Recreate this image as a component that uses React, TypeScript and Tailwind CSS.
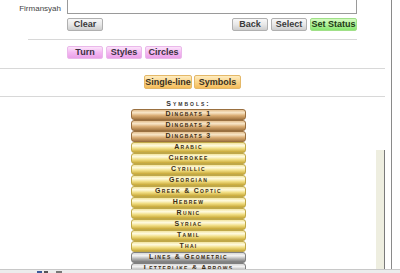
import React from "react";

const grayBtn =
  "h-[13px] border border-[#b0b0b0] rounded-[2px] bg-gradient-to-b from-[#f8f8f8] via-[#e8e8e8] to-[#cdcdcd] text-[9px] font-bold leading-[11px] text-[#3a3a3a] text-center";
const pinkBtn =
  "h-[13px] border border-[#eab8ea] rounded-[2px] bg-gradient-to-b from-[#fbe4fa] via-[#f4b8f2] to-[#eaa0e8] text-[9px] font-bold leading-[11px] text-[#3a3040] text-center";
const orangeBtn =
  "h-[14px] border border-[#e4b868] rounded-[2px] bg-gradient-to-b from-[#feecc0] via-[#fad488] to-[#f4bc5a] text-[9px] font-bold leading-[12px] text-[#3a3020] text-center";

type Sym = { label: string; tone: "bronze" | "gold" | "silver" };

const symbols: Sym[] = [
  { label: "Dingbats 1", tone: "bronze" },
  { label: "Dingbats 2", tone: "bronze" },
  { label: "Dingbats 3", tone: "bronze" },
  { label: "Arabic", tone: "gold" },
  { label: "Cherokee", tone: "gold" },
  { label: "Cyrillic", tone: "gold" },
  { label: "Georgian", tone: "gold" },
  { label: "Greek & Coptic", tone: "gold" },
  { label: "Hebrew", tone: "gold" },
  { label: "Runic", tone: "gold" },
  { label: "Syriac", tone: "gold" },
  { label: "Tamil", tone: "gold" },
  { label: "Thai", tone: "gold" },
  { label: "Lines & Geometric", tone: "silver" },
  { label: "Letterlike & Arrows", tone: "silver" },
];

const toneClass = {
  bronze:
    "border-[#9a7040] bg-[linear-gradient(to_bottom,#e4c090_0%,#f8e6c8_30%,#dcb078_60%,#a87a44_100%)]",
  gold: "border-[#c0a848] bg-[linear-gradient(to_bottom,#f2e4a0_0%,#fffbe0_30%,#f0dc80_62%,#c8a838_100%)]",
  silver:
    "border-[#808080] bg-[linear-gradient(to_bottom,#d8d8d8_0%,#f4f4f4_30%,#b8b8b8_62%,#7a7a7a_100%)]",
};

function SymbolButton({ item }: { item: Sym }) {
  return (
    <div
      className={`h-[11px] border rounded-[3px] flex items-center justify-center text-[7px] font-bold tracking-[1.3px] text-[#3a2c14] [font-variant:small-caps] ${toneClass[item.tone]}`}
    >
      {item.label}
    </div>
  );
}

export default function App() {
  return (
    <div className="relative w-[400px] h-[273px] overflow-hidden bg-white font-['Liberation_Sans',Arial,sans-serif]">
      <div className="flex h-full">
        {/* Main column */}
        <div className="w-[385px] flex flex-col">
          {/* Name row */}
          <div className="flex items-start">
            <div className="w-[64px] pt-[3px] pr-[3px] text-right text-[8px] text-[#444]">
              Firmansyah
            </div>
            <div className="ml-[3px] -mt-[1px] w-[290px] h-[15px] border border-[#9a9a9a] border-t-[#7a7a7a] bg-white" />
          </div>

          {/* Actions */}
          <div className="flex mt-[3px] pl-[67px] pr-[28px]">
            <button className={`${grayBtn} w-[36px]`}>Clear</button>
            <div className="flex-1" />
            <div className="flex gap-[3px]">
              <button className={`${grayBtn} w-[36px]`}>Back</button>
              <button className={`${grayBtn} w-[36px]`}>Select</button>
              <button className="h-[13px] w-[47px] border border-[#a0e088] rounded-[2px] bg-gradient-to-b from-[#d4fac0] via-[#aef298] to-[#88e670] text-[9px] font-bold leading-[11px] text-[#1e3a14] text-center">
                Set Status
              </button>
            </div>
          </div>

          <div className="ml-[28px] w-[329px] h-[2px] mt-[8px] bg-[#a4a4a4] border-b border-[#d8d8d8]" />

          {/* Modes */}
          <div className="flex gap-[3px] mt-[6px] pl-[67px]">
            <button className={`${pinkBtn} w-[36px]`}>Turn</button>
            <button className={`${pinkBtn} w-[36px]`}>Styles</button>
            <button className={`${pinkBtn} w-[37px]`}>Circles</button>
          </div>

          <div className="w-full h-[2px] mt-[9px] bg-[#a4a4a4] border-b border-[#d8d8d8]" />

          <div className="flex justify-center gap-[2px] mt-[6px]">
            <button className={`${orangeBtn} w-[48px]`}>Single-line</button>
            <button className={`${orangeBtn} w-[47px]`}>Symbols</button>
          </div>

          <div className="w-full h-[2px] mt-[7px] bg-[#a4a4a4] border-b border-[#d8d8d8]" />

          {/* Symbols list */}
          <div className="ml-[131px] w-[115px] flex flex-col">
            <div className="h-[11px] mt-[1px] text-center text-[7px] font-bold tracking-[2px] leading-[11px] text-[#333] [font-variant:small-caps]">
              Symbols:
            </div>
            {symbols.map((s) => (
              <SymbolButton key={s.label} item={s} />
            ))}
          </div>
        </div>

        {/* Right edge */}
        <div className="w-[6px]" />
        <div className="w-[1px] bg-[#8a8a8a]" />
      </div>

      {/* Beige strip near the edge */}
      <div className="absolute right-[15px] top-[150px] bottom-0 w-[9px] bg-[#eeeee0] border-r border-[#7a7a7a]" />

      {/* Status bar */}
      <div className="absolute left-0 right-0 bottom-0 h-[4px] bg-[#ececec] border-t border-[#c8c8c8] flex items-end">
        <div className="ml-[37px] w-[5px] h-[2px] bg-[#3b5a9a]" />
        <div className="ml-[2px] w-[4px] h-[2px] bg-[#555]" />
        <div className="ml-[8px] w-[6px] h-[2px] bg-[#777]" />
      </div>
    </div>
  );
}
